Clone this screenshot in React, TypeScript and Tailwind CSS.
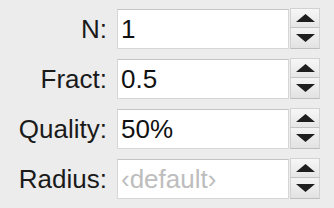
const rows = [
  { label: 'N:', value: '1' },
  { label: 'Fract:', value: '0.5' },
  { label: 'Quality:', value: '50%' },
  { label: 'Radius:', value: '', placeholder: '‹default›' },
]

function Stepper() {
  return (
    <div className="ml-px flex flex-col w-[30px] h-[41px] -mt-[2px]">
      <button className="h-[20px] flex items-center justify-center bg-gradient-to-b from-[#f7f7f7] to-[#e6e6e6] border border-[#d2d2d2] border-b-[#c4c4c4]">
        <svg width="19" height="8" viewBox="0 0 19 8">
          <polygon points="9.5,0 19,8 0,8" fill="#1e1e1e" />
        </svg>
      </button>
      <button className="h-[21px] flex items-center justify-center bg-gradient-to-b from-[#f4f4f4] to-[#e2e2e2] border border-t-0 border-[#d2d2d2] border-b-[#bdbdbd]">
        <svg width="19" height="8" viewBox="0 0 19 8">
          <polygon points="0,0 19,0 9.5,8" fill="#1e1e1e" />
        </svg>
      </button>
    </div>
  )
}

export default function App() {
  return (
    <div
      className="w-[334px] h-[208px] bg-[#ececec] pt-[9px] flex flex-col gap-[10px]"
      style={{ fontFamily: '"Liberation Sans", Arial, sans-serif' }}
    >
      {rows.map((r) => (
        <div key={r.label} className="flex items-center h-[40px]">
          <div className="w-[107px] text-right text-[26px] leading-none text-[#1a1a1a]">{r.label}</div>
          <div className="ml-[10px] w-[172px] h-[40px] bg-white border border-[#d6d6d6] border-t-[#c4c4c4] flex items-center pl-[3px] text-[26px] leading-none">
            {r.value ? (
              <span className="text-[#111]">{r.value}</span>
            ) : (
              <span className="text-[#bdbdbd]">{r.placeholder}</span>
            )}
          </div>
          <Stepper />
        </div>
      ))}
    </div>
  )
}
